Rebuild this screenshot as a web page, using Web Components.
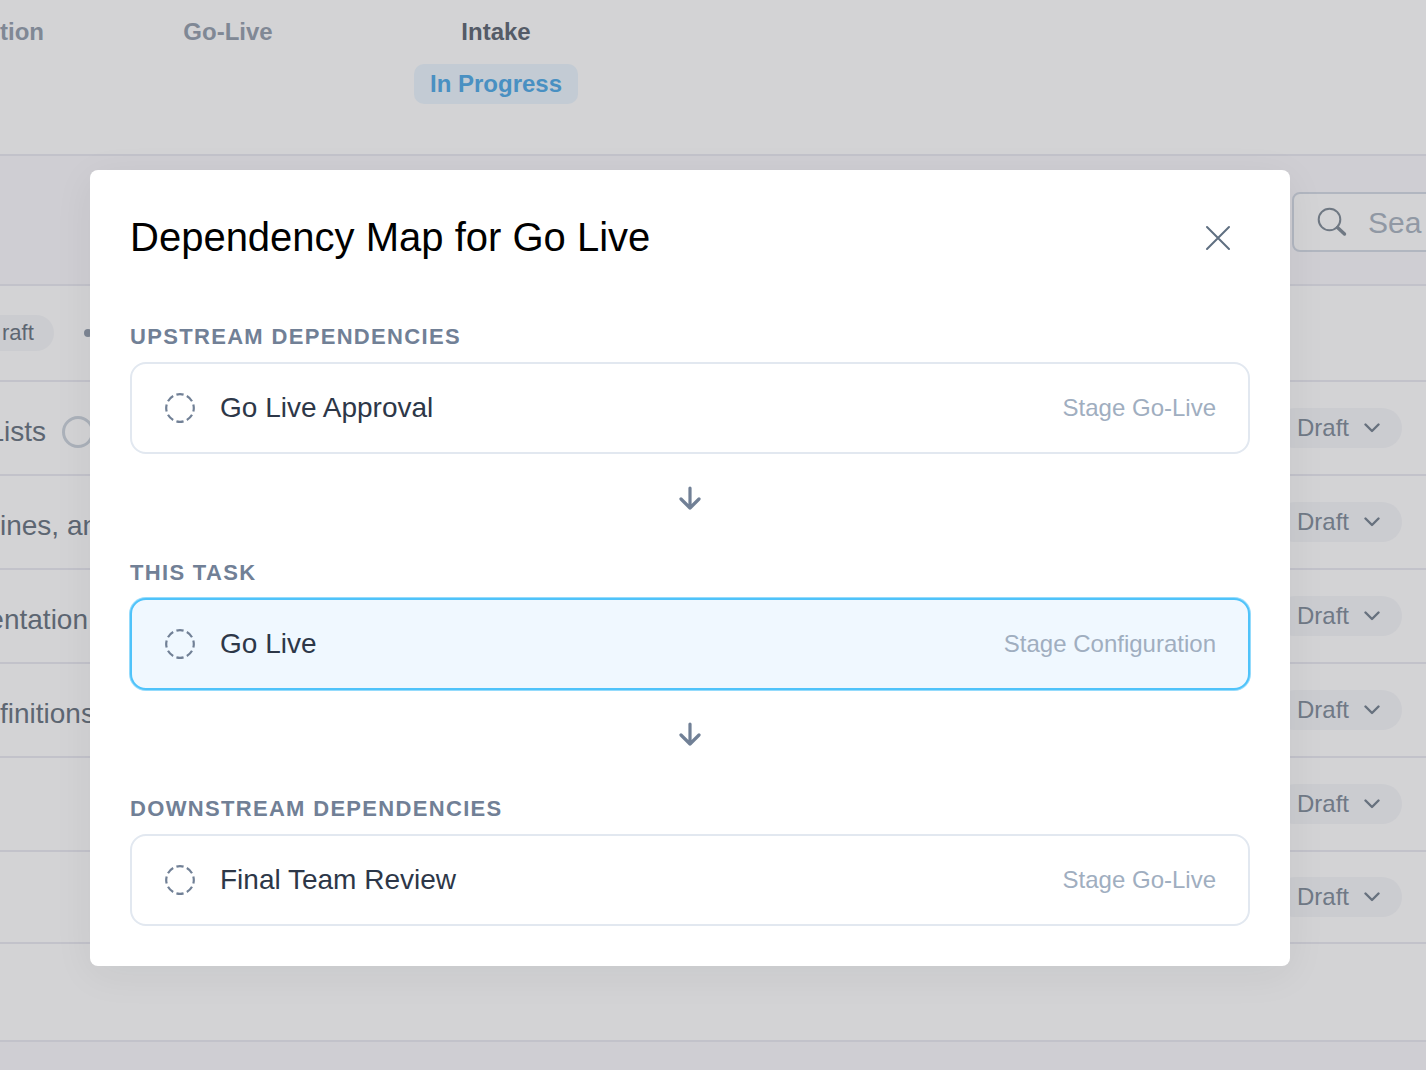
<!DOCTYPE html>
<html lang="en">
<head>
<meta charset="utf-8">
<title>Dependency Map</title>
<style>
    html, body {
        margin: 0;
        height: 100%;
    }

    body {
        background-color: #cfced3;
        font-family: "Liberation Sans", Arial, Helvetica, sans-serif;
        font-size: 24px;
        overflow: hidden;
    }
</style>
</head>
<body>
    <project-page>
        <stage-bar slot="stages">
            <stage-step>tion</stage-step>
            <stage-step>Go-Live</stage-step>
            <stage-step current status="In Progress">Intake</stage-step>
        </stage-bar>
        <search-bar slot="tools"></search-bar>
        <group-row>raft</group-row>
        <task-row ring end>Lists</task-row>
        <task-row>ines, an</task-row>
        <task-row end>entation</task-row>
        <task-row>finitions</task-row>
        <task-row></task-row>
        <task-row last></task-row>
    </project-page>

    <modal-dialog heading="Dependency Map for Go Live">
        <dependency-group heading="Upstream Dependencies">
            <dependency-card stage="Stage Go-Live">Go Live Approval</dependency-card>
        </dependency-group>
        <flow-arrow></flow-arrow>
        <dependency-group heading="This Task">
            <dependency-card stage="Stage Configuration" active>Go Live</dependency-card>
        </dependency-group>
        <flow-arrow></flow-arrow>
        <dependency-group heading="Downstream Dependencies">
            <dependency-card stage="Stage Go-Live">Final Team Review</dependency-card>
        </dependency-group>
    </modal-dialog>

<script>
class BaseElement extends HTMLElement {
    constructor() {
        super();
        this.attachShadow({ mode: 'open' });
    }

    connectedCallback() {
        this.shadowRoot.innerHTML = this.render();
    }
}

// Page behind the dialog
class ProjectPage extends BaseElement {
    render() {
        return `
            <style>
                :host {
                    display: block;
                }

                main {
                    background-color: #d3d3d5;
                    padding-bottom: 96px;
                    border-bottom: 2px solid #c2c2ca;
                }
            </style>
            <slot name="stages"></slot>
            <slot name="tools"></slot>
            <main><slot></slot></main>
        `;
    }
}

class StageBar extends BaseElement {
    render() {
        return `
            <style>
                :host {
                    display: grid;
                    grid-template-columns: 94px 268px 268px;
                    padding: 16px 0 50px;
                    background-color: #d3d3d5;
                    border-bottom: 2px solid #c2c2ca;
                }
            </style>
            <slot></slot>
        `;
    }
}

class StageStep extends BaseElement {
    render() {
        const status = this.getAttribute('status');

        return `
            <style>
                :host {
                    display: flex;
                    flex-direction: column;
                    align-items: center;
                    gap: 16px;
                    color: #808895;
                    font-weight: bold;
                    line-height: 32px;
                }

                :host(:first-child) {
                    align-items: flex-start;
                }

                :host([current]) {
                    color: #545b67;
                }

                .status {
                    padding: 0 16px;
                    line-height: 40px;
                    border-radius: 10px;
                    color: #4990c2;
                    background-color: #c3cbd4;
                }
            </style>
            <span><slot></slot></span>
            ${status ? `<span class="status">${status}</span>` : ''}
        `;
    }
}

class SearchBar extends BaseElement {
    render() {
        return `
            <style>
                :host {
                    display: flex;
                    justify-content: flex-end;
                    padding: 36px 0 32px;
                    border-bottom: 2px solid #c2c2ca;
                }

                label {
                    display: flex;
                    align-items: center;
                    gap: 20px;
                    box-sizing: border-box;
                    width: 160px;
                    height: 60px;
                    margin-right: -26px;
                    padding-left: 22px;
                    border: 2px solid #b1b6c0;
                    border-radius: 8px;
                    background-color: #d3d3d5;
                }

                svg {
                    flex: none;
                }

                input {
                    flex: 1;
                    min-width: 0;
                    padding: 2px 0 0;
                    border: 0;
                    outline: 0;
                    background: none;
                    font: inherit;
                    font-size: 30px;
                }

                input::placeholder {
                    color: #9098a4;
                    opacity: 1;
                }
            </style>
            <label>
                <svg width="32" height="32" viewBox="0 0 32 32" fill="none" stroke="#6f7883" stroke-linecap="round" aria-hidden="true">
                    <circle cx="13.5" cy="13.5" r="10.8" stroke-width="2"/>
                    <path d="M21.5 21.5L28.5 28" stroke-width="3.4"/>
                </svg>
                <input type="search" placeholder="Sea" aria-label="Search">
            </label>
        `;
    }
}

class GroupRow extends BaseElement {
    render() {
        return `
            <style>
                :host {
                    display: flex;
                    align-items: center;
                    gap: 30px;
                    height: 94px;
                    border-bottom: 2px solid #c2c2ca;
                }

                .pill {
                    padding: 0 20px 0 2px;
                    border-radius: 0 18px 18px 0;
                    background-color: #cbccd0;
                    color: #5d6672;
                    font-size: 22px;
                    line-height: 36px;
                }

                .dot {
                    width: 8px;
                    height: 8px;
                    border-radius: 50%;
                    background-color: #7d8694;
                }
            </style>
            <span class="pill"><slot></slot></span>
            <span class="dot"></span>
        `;
    }
}

class TaskRow extends BaseElement {
    render() {
        return `
            <style>
                :host {
                    display: flex;
                    align-items: center;
                    justify-content: space-between;
                    height: 92px;
                    padding-right: 24px;
                    border-bottom: 2px solid #c2c2ca;
                }

                :host([last]) {
                    height: 90px;
                }

                .name {
                    display: flex;
                    align-items: center;
                    gap: 16px;
                    width: 88px;
                    padding-top: 8px;
                    color: #5d6672;
                    font-size: 28px;
                    line-height: 32px;
                    white-space: nowrap;
                }

                :host([end]) .name {
                    justify-content: flex-end;
                }

                .ring {
                    flex: none;
                    box-sizing: border-box;
                    width: 32px;
                    height: 32px;
                    margin-right: -6px;
                    border: 3px solid #abb1ba;
                    border-radius: 50%;
                }

                .status {
                    display: flex;
                    align-items: center;
                    gap: 14px;
                    height: 40px;
                    padding: 0 22px;
                    border-radius: 20px;
                    background-color: #cbccd0;
                }

                select {
                    appearance: none;
                    padding: 0 0 2px;
                    border: 0;
                    background: none;
                    color: #707986;
                    font: inherit;
                }
            </style>
            <div class="name">
                <span><slot></slot></span>
                ${this.hasAttribute('ring') ? '<span class="ring"></span>' : ''}
            </div>
            <label class="status">
                <select aria-label="Status"><option>Draft</option></select>
                <svg width="16" height="10" viewBox="0 0 16 10" fill="none" stroke="#67717e" stroke-width="2.4" stroke-linecap="round" stroke-linejoin="round" aria-hidden="true">
                    <path d="M1.5 1.5L8 8L14.5 1.5"/>
                </svg>
            </label>
        `;
    }
}

// Dialog, laid over the page
class ModalDialog extends BaseElement {
    render() {
        return `
            <style>
                :host {
                    position: absolute;
                    inset: 0;
                    padding: 170px 136px 0 90px;
                }

                section {
                    padding: 40px;
                    border-radius: 8px;
                    background-color: #fff;
                    box-shadow: 0 8px 40px rgba(20, 30, 40, 0.06);
                }

                header {
                    display: flex;
                    justify-content: space-between;
                    align-items: flex-start;
                    margin-bottom: 40px;
                }

                h2 {
                    margin: 0;
                    color: #000;
                    font-size: 40px;
                    font-weight: normal;
                    line-height: 54px;
                }

                button {
                    display: flex;
                    align-items: center;
                    justify-content: center;
                    width: 64px;
                    height: 56px;
                    padding: 0;
                    border: 0;
                    background: none;
                }
            </style>
            <section role="dialog" aria-modal="true" aria-labelledby="title">
                <header>
                    <h2 id="title">${this.getAttribute('heading')}</h2>
                    <button type="button" aria-label="Close">
                        <svg width="26" height="26" viewBox="0 0 26 26" stroke="#5f6f81" stroke-width="2" stroke-linecap="round" aria-hidden="true">
                            <path d="M2 2L24 24M24 2L2 24"/>
                        </svg>
                    </button>
                </header>
                <slot></slot>
            </section>
        `;
    }
}

class DependencyGroup extends BaseElement {
    render() {
        return `
            <style>
                :host {
                    display: block;
                    padding-top: 14px;
                }

                h3 {
                    margin: 0 0 8px;
                    color: #718096;
                    font-size: 22px;
                    line-height: 34px;
                    letter-spacing: 0.06em;
                    text-transform: uppercase;
                }
            </style>
            <h3>${this.getAttribute('heading')}</h3>
            <slot></slot>
        `;
    }
}

class DependencyCard extends BaseElement {
    render() {
        return `
            <style>
                :host {
                    display: flex;
                    align-items: center;
                    gap: 24px;
                    height: 88px;
                    padding: 0 32px;
                    border: 2px solid #e2e8f0;
                    border-radius: 16px;
                    color: #2d3748;
                    font-size: 28px;
                }

                :host([active]) {
                    border-color: #4fc3fa;
                    background-color: #f0f8ff;
                    box-shadow: 0 0 0 1px rgba(79, 195, 250, 0.6);
                }

                .stage {
                    margin-left: auto;
                    color: #a0aec0;
                    font-size: 24px;
                }
            </style>
            <svg width="32" height="32" viewBox="0 0 32 32" fill="none" stroke="#718096" stroke-width="2.2" aria-hidden="true">
                <circle cx="16" cy="16" r="13.8" pathLength="80" stroke-dasharray="6.8 3.2" stroke-dashoffset="3.4"/>
            </svg>
            <span><slot></slot></span>
            <span class="stage">${this.getAttribute('stage')}</span>
        `;
    }
}

class FlowArrow extends BaseElement {
    render() {
        return `
            <style>
                :host {
                    display: flex;
                    align-items: center;
                    justify-content: center;
                    height: 88px;
                }
            </style>
            <svg width="24" height="24" viewBox="0 0 24 24" fill="none" stroke="#718096" stroke-width="3.2" stroke-linecap="round" stroke-linejoin="round" aria-hidden="true">
                <path d="M12 2V22M3 13L12 22L21 13"/>
            </svg>
        `;
    }
}

customElements.define('project-page', ProjectPage);
customElements.define('stage-bar', StageBar);
customElements.define('stage-step', StageStep);
customElements.define('search-bar', SearchBar);
customElements.define('group-row', GroupRow);
customElements.define('task-row', TaskRow);
customElements.define('modal-dialog', ModalDialog);
customElements.define('dependency-group', DependencyGroup);
customElements.define('dependency-card', DependencyCard);
customElements.define('flow-arrow', FlowArrow);
</script>
</body>
</html>
